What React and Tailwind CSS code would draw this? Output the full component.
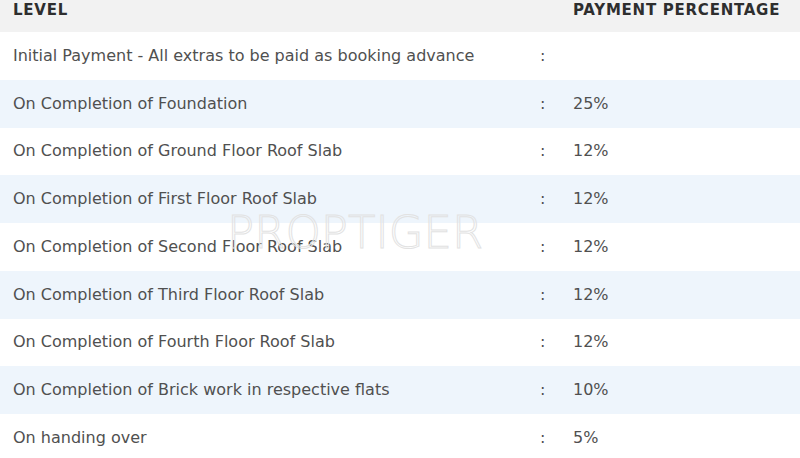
import React from 'react';

const rows = [
  { level: 'Initial Payment - All extras to be paid as booking advance', pct: '' },
  { level: 'On Completion of Foundation', pct: '25%' },
  { level: 'On Completion of Ground Floor Roof Slab', pct: '12%' },
  { level: 'On Completion of First Floor Roof Slab', pct: '12%' },
  { level: 'On Completion of Second Floor Roof Slab', pct: '12%' },
  { level: 'On Completion of Third Floor Roof Slab', pct: '12%' },
  { level: 'On Completion of Fourth Floor Roof Slab', pct: '12%' },
  { level: 'On Completion of Brick work in respective flats', pct: '10%' },
  { level: 'On handing over', pct: '5%' },
];

export default function App() {
  return (
    <div className="relative w-[800px] h-[458px] overflow-hidden bg-white font-['DejaVu_Sans',sans-serif]">
      <div className="flex items-center h-[32px] px-[13px] pb-[12px] bg-[#f2f2f2] text-[#2e2e2e] text-[15px] font-bold tracking-[0.75px]">
        <div className="w-[560px]">LEVEL</div>
        <div>PAYMENT PERCENTAGE</div>
      </div>

      {rows.map((r, i) => (
        <div
          key={i}
          className={`flex items-center h-[47.75px] px-[13px] text-[16px] text-[#505050] ${i % 2 ? 'bg-[#eef5fc]' : 'bg-white'}`}
        >
          <div className="w-[527px]">{r.level}</div>
          <div className="w-[33px]">:</div>
          <div>{r.pct}</div>
        </div>
      ))}

      {/* watermark */}
      <div className="absolute left-[227px] top-[199px] text-[45px] font-extralight text-transparent [-webkit-text-stroke:1px_#e2e2e2] pointer-events-none select-none">
        PROPTIGER
      </div>
    </div>
  );
}
